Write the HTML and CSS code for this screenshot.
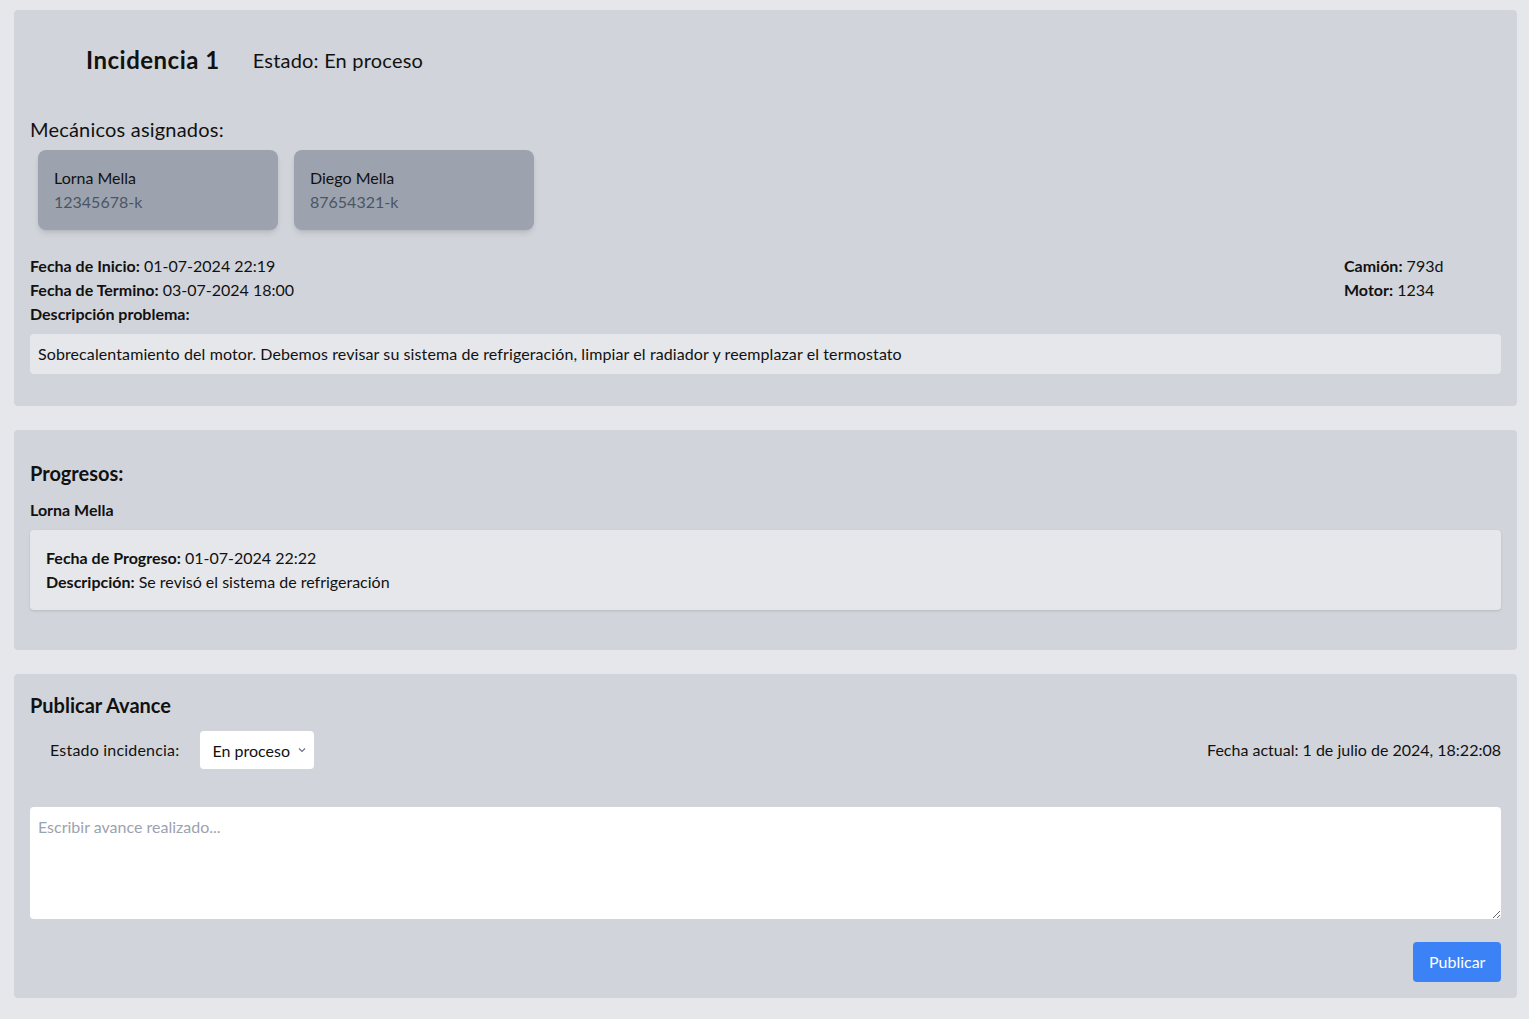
FILE: index.html
```html
<!DOCTYPE html>
<html lang="es">
<head>
<meta charset="utf-8">
<title>Incidencia 1</title>
<link rel="stylesheet" href="styles.css">
</head>
<body>
<main class="page">
  <section class="panel">
    <div class="title-row">
      <h1 class="title">Incidencia 1</h1>
      <span class="status">Estado: En proceso</span>
    </div>
    <h2 class="sub-heading">Mecánicos asignados:</h2>
    <div class="mechanics">
      <div class="mech-card">
        <div class="mech-name">Lorna Mella</div>
        <div class="mech-id">12345678-k</div>
      </div>
      <div class="mech-card">
        <div class="mech-name">Diego Mella</div>
        <div class="mech-id">87654321-k</div>
      </div>
    </div>
    <div class="info">
      <div class="info-left">
        <p><strong>Fecha de Inicio:</strong> 01-07-2024 22:19</p>
        <p><strong>Fecha de Termino:</strong> 03-07-2024 18:00</p>
        <p><strong>Descripción problema:</strong></p>
      </div>
      <div class="info-right">
        <p><strong>Camión:</strong> 793d</p>
        <p><strong>Motor:</strong> 1234</p>
      </div>
    </div>
    <div class="desc-box">Sobrecalentamiento del motor. Debemos revisar su sistema de refrigeración, limpiar el radiador y reemplazar el termostato</div>
  </section>

  <section class="panel">
    <h2 class="section-heading progress-heading">Progresos:</h2>
    <h3 class="author">Lorna Mella</h3>
    <div class="progress-box">
      <p><strong>Fecha de Progreso:</strong> 01-07-2024 22:22</p>
      <p><strong>Descripción:</strong> Se revisó el sistema de refrigeración</p>
    </div>
  </section>

  <section class="panel">
    <h2 class="section-heading publish-heading">Publicar Avance</h2>
    <div class="form-row">
      <div class="field">
        <label class="field-label" for="estado">Estado incidencia:</label>
        <div class="select-wrap">
          <select id="estado" class="select">
            <option>En proceso</option>
            <option>Finalizada</option>
          </select>
          <svg class="chevron" width="8" height="6" viewBox="0 0 8 6"><path d="M1 1.5 L4 4.5 L7 1.5" fill="none" stroke="#6b7280" stroke-width="1.2"/></svg>
        </div>
      </div>
      <span class="date-now">Fecha actual: 1 de julio de 2024, 18:22:08</span>
    </div>
    <textarea class="textarea" placeholder="Escribir avance realizado..."></textarea>
    <div class="actions">
      <button class="btn">Publicar</button>
    </div>
  </section>
</main>
</body>
</html>
```
FILE: styles.css
```css
* { box-sizing: border-box; }
html, body { margin: 0; padding: 0; }
body {
  background: #e5e7eb;
  font-family: Lato, "Open Sans", sans-serif;
  font-size: 16px;
  line-height: 24px;
  color: #111;
}
p, h1, h2, h3 { margin: 0; }
strong { font-weight: 700; }

.page {
  padding: 10px 12px 20px 14px;
  display: flex;
  flex-direction: column;
  gap: 24px;
}
.panel {
  background: #d1d5db;
  border-radius: 4px;
  padding: 16px;
}

.title-row {
  display: flex;
  align-items: center;
  gap: 33px;
  padding: 18px 56px;
}
.title { font-size: 24px; line-height: 32px; font-weight: 700; letter-spacing: 0.5px; }
.status { font-size: 20px; line-height: 28px; letter-spacing: 0.2px; }

.sub-heading {
  font-size: 20px; line-height: 28px; font-weight: 400;
  margin-top: 21px; margin-bottom: 7px;
  letter-spacing: 0.2px;
}
.mechanics { display: flex; gap: 16px; padding-left: 8px; }
.mech-card {
  width: 240px;
  background: #9ca3af;
  border-radius: 8px;
  padding: 16px;
  box-shadow: 0 4px 6px -1px rgba(0,0,0,.1), 0 2px 4px -2px rgba(0,0,0,.1);
}
.mech-name { color: #111; }
.mech-id { color: #4b5563; }

.info {
  display: flex;
  justify-content: space-between;
  margin-top: 24px;
}
.info-right { width: 157px; }

.desc-box {
  margin-top: 8px;
  margin-bottom: 16px;
  background: #e5e7eb;
  border-radius: 4px;
  padding: 8px;
  letter-spacing: 0.1px;
}

.section-heading { font-size: 20px; line-height: 28px; font-weight: 700; }
.progress-heading { margin-top: 13px; }
.author { font-size: 16px; line-height: 24px; font-weight: 700; margin-top: 11px; }
.progress-box {
  margin-top: 8px;
  margin-bottom: 24px;
  background: #e5e7eb;
  border-radius: 4px;
  padding: 16px;
  box-shadow: 0 1px 3px 0 rgba(0,0,0,.1), 0 1px 2px -1px rgba(0,0,0,.1);
}

.publish-heading { margin-top: 1px; }
.form-row {
  display: flex;
  justify-content: space-between;
  align-items: center;
  margin-top: 12px;
}
.field { display: flex; align-items: center; gap: 21px; padding-left: 20px; }
.field-label { letter-spacing: 0.2px; }
.select-wrap { position: relative; }
.select {
  appearance: none;
  -webkit-appearance: none;
  background: #fff;
  border: none;
  border-radius: 4px;
  height: 38px;
  width: 114px;
  padding: 0 24px 0 12px;
  font-family: inherit;
  font-size: 16px;
  color: #111;
}
.chevron { position: absolute; right: 8px; top: 16px; pointer-events: none; }

.textarea {
  display: block;
  width: 100%;
  height: 112px;
  margin-top: 38px;
  background: #fff;
  border: none;
  border-radius: 4px;
  padding: 8px;
  font-family: inherit;
  font-size: 16px;
  line-height: 24px;
  color: #111;
  resize: vertical;
}
.textarea::placeholder { color: #9ca3af; }

.actions { display: flex; justify-content: flex-end; margin-top: 23px; }
.btn {
  background: #3b82f6;
  color: #fff;
  border: none;
  border-radius: 4px;
  padding: 8px 16px;
  font-family: inherit;
  font-size: 16px;
  line-height: 24px;
  width: 88px;
}
```
